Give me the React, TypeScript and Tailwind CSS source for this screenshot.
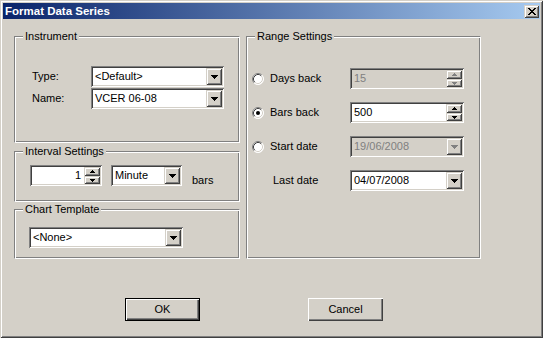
import React from "react";

const sunken =
  "shadow-[inset_1px_1px_0_#808080,inset_-1px_-1px_0_#ffffff,inset_2px_2px_0_#404040,inset_-2px_-2px_0_#d4d0c8]";
const raised =
  "shadow-[inset_1px_1px_0_#d4d0c8,inset_-1px_-1px_0_#404040,inset_2px_2px_0_#ffffff,inset_-2px_-2px_0_#808080]";
const etched =
  "border border-t-[#808080] border-l-[#808080] border-r-white border-b-white shadow-[inset_1px_1px_0_#ffffff,inset_-1px_-1px_0_#808080]";

function Arrow({ up, rows, color }: { up?: boolean; rows: number; color: string }) {
  const w = rows * 2 - 1;
  return (
    <svg width={w} height={rows} shapeRendering="crispEdges">
      {Array.from({ length: rows }).map((_, i) => (
        <rect key={i} x={i} y={up ? rows - 1 - i : i} width={w - 2 * i} height={1} fill={color} />
      ))}
    </svg>
  );
}

function Combo({ value, className, disabled }: { value: string; className: string; disabled?: boolean }) {
  return (
    <div
      className={`flex h-[21px] p-[2px] ${sunken} ${disabled ? "bg-[#d4d0c8] text-[#808080]" : "bg-white text-black"} ${className}`}
    >
      <div className="flex flex-1 items-center pl-[2px]">{value}</div>
      <div className={`flex w-[16px] items-center justify-center bg-[#d4d0c8] ${raised}`}>
        <Arrow rows={4} color={disabled ? "#808080" : "#000"} />
      </div>
    </div>
  );
}

function Spin({
  value,
  className,
  disabled,
  right,
}: {
  value: string;
  className: string;
  disabled?: boolean;
  right?: boolean;
}) {
  const c = disabled ? "#808080" : "#000";
  return (
    <div
      className={`flex h-[21px] p-[2px] ${sunken} ${disabled ? "bg-[#d4d0c8] text-[#808080]" : "bg-white text-black"} ${className}`}
    >
      <div className={`flex flex-1 items-center ${right ? "justify-end pr-[3px]" : "pl-[2px]"}`}>{value}</div>
      <div className="flex w-[16px] flex-col">
        <div className={`flex h-[9px] items-center justify-center bg-[#d4d0c8] ${raised}`}>
          <Arrow up rows={3} color={c} />
        </div>
        <div className={`flex h-[8px] items-center justify-center bg-[#d4d0c8] ${raised}`}>
          <Arrow rows={3} color={c} />
        </div>
      </div>
    </div>
  );
}

function Radio({ checked }: { checked?: boolean }) {
  return (
    <svg width="12" height="12" className="shrink-0">
      <circle cx="6" cy="6" r="5.5" fill="#ffffff" />
      <path d="M2.11 9.89 A5.5 5.5 0 0 1 9.89 2.11" fill="none" stroke="#808080" />
      <path d="M2.82 9.18 A4.5 4.5 0 0 1 9.18 2.82" fill="none" stroke="#404040" />
      <path d="M9.89 2.11 A5.5 5.5 0 0 1 2.11 9.89" fill="none" stroke="#ffffff" />
      <path d="M9.18 2.82 A4.5 4.5 0 0 1 2.82 9.18" fill="none" stroke="#d4d0c8" />
      {checked && <circle cx="6" cy="6" r="2" fill="#000" />}
    </svg>
  );
}

function Group({ title, className, children }: { title: string; className: string; children: React.ReactNode }) {
  return (
    <div className={`relative ${etched} ${className}`}>
      <span className="absolute left-[8px] top-[-7px] bg-[#d4d0c8] px-[2px] leading-[13px]">{title}</span>
      {children}
    </div>
  );
}

function CloseGlyph() {
  const rows = ["11000011", "01100110", "00111100", "00011000", "00111100", "01100110", "11000011"];
  return (
    <svg width="8" height="7" shapeRendering="crispEdges">
      {rows.map((r, y) =>
        r.split("").map((ch, x) => (ch === "1" ? <rect key={`${x}-${y}`} x={x} y={y} width={1} height={1} fill="#000" /> : null))
      )}
    </svg>
  );
}

export default function App() {
  return (
    <div className="flex h-[338px] w-[543px] flex-col bg-[#d4d0c8] px-[3px] pt-[3px] font-['Liberation_Sans',Arial,sans-serif] text-[11px] leading-[13px] text-black shadow-[inset_1px_1px_0_#d4d0c8,inset_-1px_-1px_0_#404040,inset_2px_2px_0_#ffffff,inset_-2px_-2px_0_#808080]">
      <div className="flex h-[16px] items-center justify-between bg-[linear-gradient(90deg,#0a246a,#a6caf0)] pl-[2px] pr-[1px]">
        <span className="text-[11.5px] font-bold text-white">Format Data Series</span>
        <div className={`flex h-[13px] w-[15px] items-center justify-center bg-[#d4d0c8] ${raised}`}>
          <CloseGlyph />
        </div>
      </div>

      <div className="mt-[17px] flex gap-[6px] pl-[11px]">
        <div className="flex w-[226px] flex-col">
          <Group title="Instrument" className="h-[107px]">
            <div className="flex flex-col gap-[1px] pl-[17px] pt-[29px]">
              <div className="flex items-center">
                <span className="w-[59px]">Type:</span>
                <Combo value="<Default>" className="w-[133px]" />
              </div>
              <div className="flex items-center">
                <span className="w-[59px]">Name:</span>
                <Combo value="VCER 06-08" className="w-[133px]" />
              </div>
            </div>
          </Group>

          <Group title="Interval Settings" className="mt-[8px] h-[51px]">
            <div className="flex items-start pl-[15px] pt-[13px]">
              <Spin value="1" right className="w-[72px]" />
              <Combo value="Minute" className="ml-[9px] w-[71px]" />
              <span className="ml-[10px] mt-[9px]">bars</span>
            </div>
          </Group>

          <Group title="Chart Template" className="mt-[7px] h-[50px]">
            <div className="pl-[14px] pt-[17px]">
              <Combo value="<None>" className="w-[154px]" />
            </div>
          </Group>
        </div>

        <Group title="Range Settings" className="h-[223px] w-[235px]">
          <div className="flex flex-col gap-[13px] pl-[5px] pt-[31px]">
            <div className="flex h-[21px] items-center">
              <div className="flex w-[98px] items-center gap-[6px]">
                <Radio />
                <span>Days back</span>
              </div>
              <Spin value="15" disabled className="w-[114px]" />
            </div>
            <div className="flex h-[21px] items-center">
              <div className="flex w-[98px] items-center gap-[6px]">
                <Radio checked />
                <span>Bars back</span>
              </div>
              <Spin value="500" className="w-[114px]" />
            </div>
            <div className="flex h-[21px] items-center">
              <div className="flex w-[98px] items-center gap-[6px]">
                <Radio />
                <span>Start date</span>
              </div>
              <Combo value="19/06/2008" disabled className="w-[114px]" />
            </div>
            <div className="flex h-[21px] items-center">
              <div className="w-[98px] pl-[21px]">Last date</div>
              <Combo value="04/07/2008" className="w-[114px]" />
            </div>
          </div>
        </Group>
      </div>

      <div className="mt-[39px] flex gap-[108px] pl-[122px]">
        <button className="flex h-[23px] w-[75px] items-center justify-center border border-black bg-[#d4d0c8] shadow-[inset_1px_1px_0_#ffffff,inset_-1px_-1px_0_#404040,inset_-2px_-2px_0_#808080]">
          OK
        </button>
        <button className="flex h-[23px] w-[75px] items-center justify-center bg-[#d4d0c8] shadow-[inset_1px_1px_0_#ffffff,inset_-1px_-1px_0_#404040,inset_-2px_-2px_0_#808080]">
          Cancel
        </button>
      </div>
    </div>
  );
}
